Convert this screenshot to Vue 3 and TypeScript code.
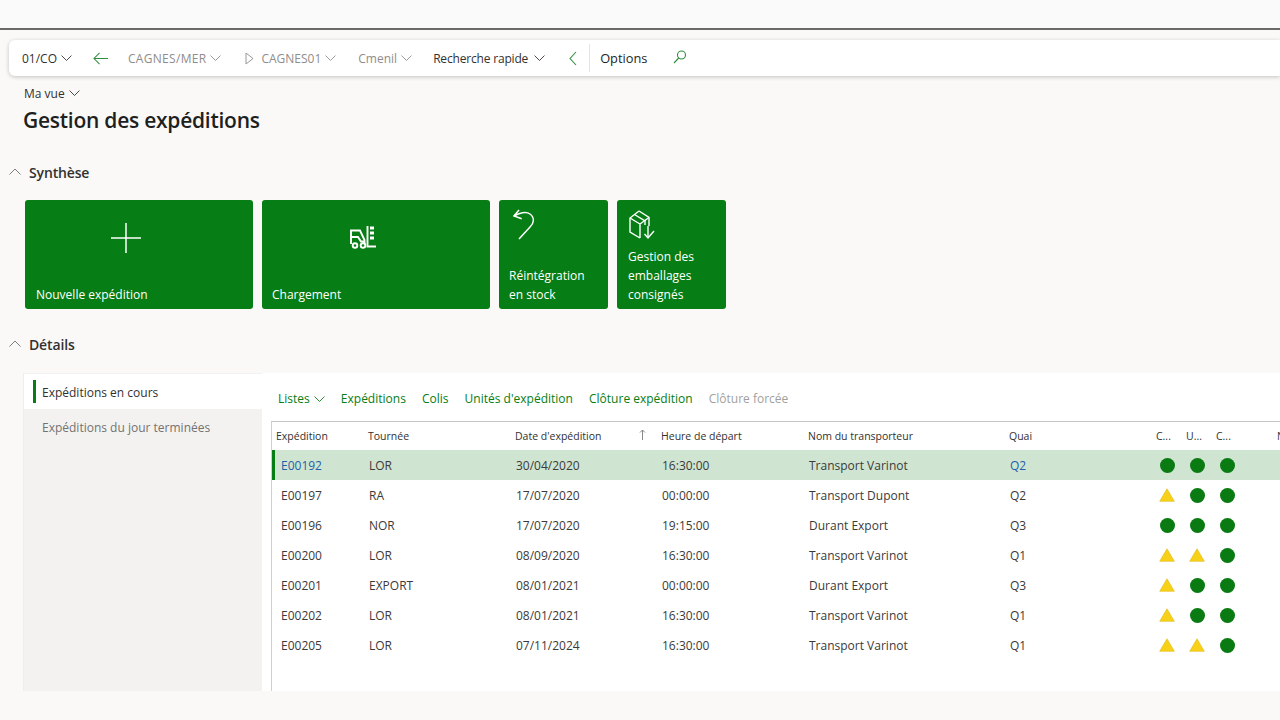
<script setup lang="ts">
type Status = 'ok' | 'warn'
interface Row {
  id: string
  tour: string
  date: string
  time: string
  carrier: string
  dock: string
  status: Status[]
}
const rows: Row[] = [
  { id: 'E00192', tour: 'LOR', date: '30/04/2020', time: '16:30:00', carrier: 'Transport Varinot', dock: 'Q2', status: ['ok', 'ok', 'ok'] },
  { id: 'E00197', tour: 'RA', date: '17/07/2020', time: '00:00:00', carrier: 'Transport Dupont', dock: 'Q2', status: ['warn', 'ok', 'ok'] },
  { id: 'E00196', tour: 'NOR', date: '17/07/2020', time: '19:15:00', carrier: 'Durant Export', dock: 'Q3', status: ['ok', 'ok', 'ok'] },
  { id: 'E00200', tour: 'LOR', date: '08/09/2020', time: '16:30:00', carrier: 'Transport Varinot', dock: 'Q1', status: ['warn', 'warn', 'ok'] },
  { id: 'E00201', tour: 'EXPORT', date: '08/01/2021', time: '00:00:00', carrier: 'Durant Export', dock: 'Q3', status: ['warn', 'ok', 'ok'] },
  { id: 'E00202', tour: 'LOR', date: '08/01/2021', time: '16:30:00', carrier: 'Transport Varinot', dock: 'Q1', status: ['warn', 'ok', 'ok'] },
  { id: 'E00205', tour: 'LOR', date: '07/11/2024', time: '16:30:00', carrier: 'Transport Varinot', dock: 'Q1', status: ['warn', 'warn', 'ok'] },
]
</script>

<template>
  <div class="page">
    <div class="topstrip"></div>
    <nav class="navbar">
      <span class="nav-item dark first">01/CO<svg class="chev" viewBox="0 0 10 6"><path d="M.5.5 5 5 9.5.5" /></svg></span>
      <svg class="back" viewBox="0 0 16 14"><path d="M7 1 1 7l6 6M1 7h15" /></svg>
      <span class="nav-item muted cagnes"><span class="caps">CAGNES/MER</span><svg class="chev" viewBox="0 0 10 6"><path d="M.5.5 5 5 9.5.5" /></svg></span>
      <svg class="play" viewBox="0 0 9 13"><path d="M1 1v11l7-5.500z" /></svg>
      <span class="nav-item muted c01">CAGNES01<svg class="chev" viewBox="0 0 10 6"><path d="M.5.5 5 5 9.5.5" /></svg></span>
      <span class="nav-item muted cmenil">Cmenil<svg class="chev" viewBox="0 0 10 6"><path d="M.5.5 5 5 9.5.5" /></svg></span>
      <span class="nav-item dark search"><span class="tight">Recherche rapide</span><svg class="chev" viewBox="0 0 10 6"><path d="M.5.5 5 5 9.5.5" /></svg></span>
      <svg class="collapse" viewBox="0 0 8 15"><path d="M7 1 1 7.500 7 14" /></svg>
      <span class="vsep"></span>
      <span class="options">Options</span>
      <svg class="loupe" viewBox="0 0 14 14"><circle cx="8.500" cy="5" r="4" /><path d="M5.700 8 1 13" /></svg>
    </nav>

    <header class="head">
      <div class="view">Ma vue<svg class="chev" viewBox="0 0 10 6"><path d="M.5.5 5 5 9.500.5" /></svg></div>
      <h1>Gestion des expéditions</h1>
    </header>

    <div class="section-title synth">
      <svg class="caret" viewBox="0 0 12 7"><path d="M.5 6.500 6 1l5.500 5.500" /></svg>Synthèse
    </div>

    <section class="tiles">
      <div class="tile wide">
        <svg class="tile-icon plus" viewBox="0 0 30 30"><path d="M15 0v30M0 15h30" /></svg>
        <span class="tile-label">Nouvelle expédition</span>
      </div>
      <div class="tile wide second">
        <svg class="tile-icon lift" viewBox="0 0 28 24">
          <path d="M2 19V5.500h9l4.500 9.500V19" />
          <path d="M2 12h7l3 4.500h3.500" />
          <circle cx="6" cy="20.500" r="2.300" />
          <circle cx="14" cy="20.500" r="2.300" />
          <path d="M18.500 1v20.500H27" />
          <path class="fat" d="M21 3h4M21 8h4M21 13h4" />
        </svg>
        <span class="tile-label">Chargement</span>
      </div>
      <div class="tile narrow">
        <svg class="tile-icon undo" viewBox="0 0 27 32"><path d="M8 1 3 7l7.700 2.700" /><path d="M3 7C8 4 15 2 19 5c5 4 4 9 0 13L8 30" /></svg>
        <span class="tile-label">Réintégration<br />en stock</span>
      </div>
      <div class="tile narrow last">
        <svg class="tile-icon box" viewBox="0 0 28 30">
          <path d="M11 1 21 7.500V16M11 1 2 8v14l10 6" />
          <path d="M2 8l10 6 9-6.500M12 14v14" />
          <path d="M6.500 4.500 17 11v4" />
          <path d="M20 16v11.500" />
          <path d="M16.500 24l3.500 4 6-7" />
        </svg>
        <span class="tile-label">Gestion des<br />emballages<br />consignés</span>
      </div>
    </section>

    <div class="section-title det">
      <svg class="caret" viewBox="0 0 12 7"><path d="M.5 6.500 6 1l5.500 5.500" /></svg>Détails
    </div>

    <section class="details">
      <aside class="side">
        <div class="side-item active"><span class="marker"></span>Expéditions en cours</div>
        <div class="side-item">Expéditions du jour terminées</div>
      </aside>
      <div class="content">
        <div class="toolbar">
          <span class="tb">Listes<svg class="chev" viewBox="0 0 10 6"><path d="M.5.5 5 5 9.500.5" /></svg></span>
          <span class="tb">Expéditions</span>
          <span class="tb">Colis</span>
          <span class="tb">Unités d'expédition</span>
          <span class="tb">Clôture expédition</span>
          <span class="tb off">Clôture forcée</span>
        </div>
        <div class="grid">
          <div class="row header">
            <span>Expédition</span>
            <span>Tournée</span>
            <span class="h-date">Date d'expédition<svg class="sort" viewBox="0 0 7 11"><path d="M3.500 11V1M1 3.500 3.500 1 6 3.500" /></svg></span>
            <span>Heure de départ</span>
            <span>Nom du transporteur</span>
            <span>Quai</span>
            <span>C...</span>
            <span>U...</span>
            <span>C...</span>
            <span>N</span>
          </div>
          <div v-for="(r, i) in rows" :key="r.id" class="row body" :class="{ selected: i === 0 }">
            <span class="c-id" :class="{ link: i === 0 }">{{ r.id }}</span>
            <span>{{ r.tour }}</span>
            <span>{{ r.date }}</span>
            <span>{{ r.time }}</span>
            <span>{{ r.carrier }}</span>
            <span :class="{ link: i === 0 }">{{ r.dock }}</span>
            <span v-for="(s, j) in r.status" :key="j" class="st">
              <span v-if="s === 'ok'" class="dot"></span>
              <svg v-else class="warn" viewBox="0 0 16 14"><path d="M8 .8 15.300 13.300H.7z" /></svg>
            </span>
            <span></span>
          </div>
        </div>
      </div>
    </section>
  </div>
</template>

<style scoped>
.page {
  width: 1280px;
  height: 720px;
  overflow: hidden;
  background: #faf9f8;
  font-family: "Open Sans", "Noto Sans", sans-serif;
  font-size: 12px;
  color: #323130;
  display: flex;
  flex-direction: column;
}
svg { fill: none; stroke: currentColor; flex: none; }
.topstrip { height: 28px; border-bottom: 2px solid #6a6a6a; background: #fbfafa; flex: none; }
.navbar {
  margin: 10px 0 0 9px;
  height: 36px;
  flex: none;
  background: #fff;
  border-radius: 6px 0 0 6px;
  box-shadow: 0 1px 4px rgba(0, 0, 0, .22);
  display: flex;
  align-items: center;
  padding-left: 13px;
  white-space: nowrap;
}
.nav-item { display: inline-flex; align-items: center; }
.dark { color: #323130; }
.muted { color: #8f8d8b; }
.chev { width: 11px; height: 6.600px; margin-left: 4px; stroke-width: .8; margin-top: 1px; }
.first { width: 60px; }
.back { width: 15px; height: 13px; margin-left: 11px; color: #2f8f3e; stroke-width: 1.1; }
.cagnes { margin-left: 20px; }
.caps { letter-spacing: .3px; }
.tight { letter-spacing: -.18px; }
.search .chev { margin-left: 6px; }
.play { width: 9px; height: 13px; margin-left: 24px; color: #9a9896; stroke-width: 1; }
.c01 { margin-left: 7px; }
.cmenil { margin-left: 22px; }
.search { margin-left: 21px; }
.collapse { width: 8px; height: 15px; margin-left: 24px; color: #2f8f3e; stroke-width: 1.1; }
.vsep { width: 1px; height: 28px; background: #e6e4e2; margin-left: 12px; }
.options { margin-left: 10px; color: #201f1e; font-size: 12.800px; font-weight: 500; }
.loupe { width: 14px; height: 14px; margin-left: 26px; margin-top: -3px; color: #2f8f3e; stroke-width: 1.1; }

.head { padding: 9px 0 0 24px; flex: none; }
.view { display: flex; align-items: center; height: 16px; }
h1 {
  margin: 5px 0 0 -1px;
  font-size: 21px;
  line-height: 28px;
  font-weight: 600;
  letter-spacing: -.25px;
  color: #201f1e;
}
.section-title {
  flex: none;
  display: flex;
  align-items: center;
  height: 20px;
  padding-left: 9px;
  font-size: 14px;
  font-weight: 600;
  letter-spacing: -.15px;
  color: #323130;
}
.caret { width: 12px; height: 7px; margin-right: 8px; stroke-width: .8; color: #605e5c; margin-top: -2px; }
.synth { margin-top: 28px; }
.tiles { margin: 18px 0 0 25px; display: flex; gap: 9px; flex: none; }
.tile {
  height: 109px;
  background: #067d15;
  border-radius: 3px;
  color: #fff;
  position: relative;
  display: flex;
  align-items: flex-end;
  padding: 0 0 5px 11px;
  box-sizing: border-box;
}
.wide { width: 228px; }
.second { padding-left: 10px; }
.narrow { width: 109px; padding-left: 10px; }
.last { padding-left: 11px; }
.tile-label { line-height: 19px; font-size: 12px; }
.tile-icon { position: absolute; color: #fff; }
.plus { width: 30px; height: 30px; left: 86px; top: 23px; stroke-width: 1.5; }
.lift { width: 28px; height: 24px; left: 87px; top: 25px; stroke-width: 1.9; }
.lift .fat { stroke-width: 2.8; }
.undo { width: 27px; height: 32px; left: 12px; top: 9px; stroke-width: 1.5; }
.box { width: 28px; height: 30px; left: 11px; top: 10px; stroke-width: 1.4; }
.det { margin-top: 25px; }
.details {
  margin: 19px 0 0 24px;
  height: 318px;
  flex: none;
  display: flex;
}
.side { width: 238px; background: #f3f2f1; padding-top: 1px; flex: none; box-shadow: -1px 0 0 #efeeed; }
.side-item { height: 35px; line-height: 37px; padding-left: 18px; color: #747270; position: relative; }
.side-item.active { background: #fff; color: #323130; }
.marker { position: absolute; left: 9px; top: 6px; width: 3px; height: 23px; background: #067d15; }
.content { flex: 1; background: #fff; min-width: 0; padding-left: 9px; }
.toolbar { height: 48px; display: flex; align-items: center; padding: 3px 0 0 7px; box-sizing: border-box; gap: 16.100px; color: #067d15; white-space: nowrap; }
.tb { display: inline-flex; align-items: center; }
.off { color: #a19f9d; }
.grid { border-top: 1px solid #c8c6c4; border-left: 1px solid #d2d0ce; height: 269px; width: 1040px; }
.row { display: grid; align-items: center; white-space: nowrap; }
.header { height: 28px; font-size: 10.500px; font-weight: 500; padding-left: 4px; grid-template-columns: 92px 147px 146px 147px 201px 147px 30px 30px 61px 1fr; }
.h-date { position: relative; }
.sort { position: absolute; left: 124px; top: 0; width: 7px; height: 11px; color: #8a8886; stroke-width: 1; }
.body { height: 30px; padding-left: 5px; grid-template-columns: 92px 147px 146px 147px 201px 147px 30px 30px 30px 1fr; font-size: 12px; color: #3b3a39; }
.c-id { padding-left: 4px; }
.selected { background: #cfe5d2; box-shadow: inset 3px 0 0 #067d15; }
.link { color: #1f5fa8; }
.st { display: flex; align-items: center; padding-left: 2.500px; }
.dot { width: 15px; height: 15px; border-radius: 50%; background: #0a7a12; display: block; }
.warn { width: 16px; height: 14px; fill: #f7d117; stroke: #e3b90e; stroke-width: .6; margin-left: -.5px; }
</style>

<style>
html, body { margin: 0; overflow: hidden; background: #faf9f8; }
</style>
